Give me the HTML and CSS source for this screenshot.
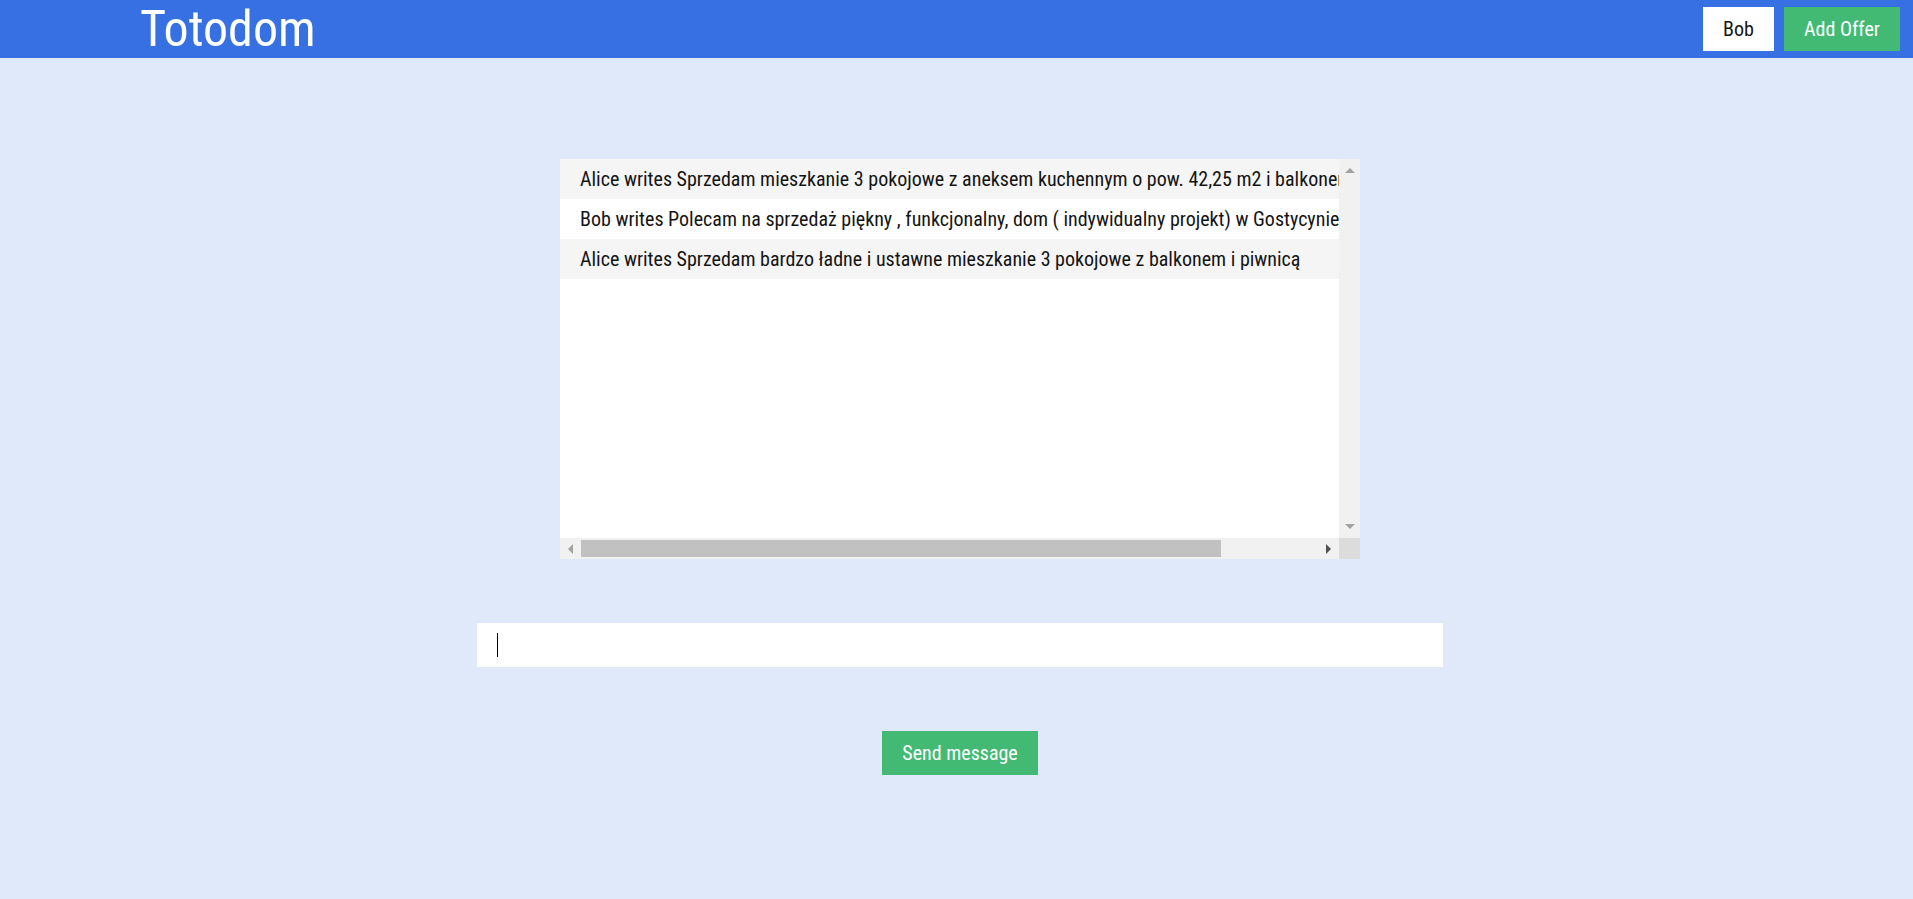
FILE: index.html
```html
<!DOCTYPE html>
<html lang="pl">
<head>
<meta charset="utf-8">
<title>Totodom</title>
<link rel="stylesheet" href="styles.css">
</head>
<body>
<header class="topbar">
  <h1 class="brand">Totodom</h1>
  <nav class="actions">
    <button class="btn btn-user">Bob</button>
    <button class="btn btn-green">Add Offer</button>
  </nav>
</header>
<main class="page">
  <section class="chat-view">
    <ul class="messages">
      <li class="msg">Alice writes Sprzedam mieszkanie 3 pokojowe z aneksem kuchennym o pow. 42,25 m2 i balkonem o pow. 4,5 m2 w nowym budownictwie</li>
      <li class="msg">Bob writes Polecam na sprzedaż piękny , funkcjonalny, dom ( indywidualny projekt) w Gostycynie</li>
      <li class="msg">Alice writes Sprzedam bardzo ładne i ustawne mieszkanie 3 pokojowe z balkonem i piwnicą</li>
    </ul>
    <div class="vscroll">
      <span class="arr arr-up"></span>
      <span class="arr arr-down"></span>
    </div>
    <div class="hscroll">
      <span class="hbtn"><span class="arr arr-left"></span></span>
      <span class="hthumb-track"><span class="hthumb"></span></span>
      <span class="hbtn"><span class="arr arr-right"></span></span>
    </div>
    <div class="corner"></div>
  </section>
  <div class="input-wrap">
    <input class="msg-input" type="text" aria-label="message">
  </div>
  <button class="btn btn-green btn-send">Send message</button>
</main>
</body>
</html>
```
FILE: styles.css
```css
* { box-sizing: border-box; }
html, body { margin: 0; padding: 0; }
body {
  background: #e0e9f9;
  font-family: Roboto, "Liberation Sans", sans-serif;
  font-stretch: condensed;
  color: #141414;
  min-height: 899px;
}
.topbar {
  height: 58px;
  background: #3670e3;
  display: flex;
  align-items: center;
  justify-content: space-between;
  padding: 0 13px 0 140px;
}
.brand {
  margin: 0;
  font-size: 50px;
  font-weight: 400;
  color: #fff;
  line-height: 58px;
}
.actions { display: flex; gap: 10px; }
.btn {
  border: 0;
  font-family: inherit;
  font-stretch: condensed;
  font-size: 20px;
  height: 44px;
  padding: 0 10px;
  cursor: pointer;
}
.btn-user { background: #fff; color: #141414; width: 71px; }
.btn-green { background: #42ba73; color: #fff; width: 116px; }
.page {
  display: flex;
  flex-direction: column;
  align-items: center;
  padding: 101px 0 0 7px;
}
.chat-view {
  display: grid;
  grid-template-columns: 779px 21px;
  grid-template-rows: 379px 21px;
  width: 800px;
  background: #fff;
}
.messages {
  list-style: none;
  margin: 0;
  padding: 0;
  overflow: hidden;
  background: #fff;
}
.msg {
  height: 40px;
  line-height: 40px;
  padding-left: 20px;
  font-size: 20px;
  white-space: nowrap;
  width: 1180px;
}
.msg:nth-child(odd) { background: #f5f5f5; }
.vscroll {
  background: #f1f1f1;
  display: flex;
  flex-direction: column;
  justify-content: space-between;
  align-items: center;
  padding: 9px 0 9px;
}
.arr { display: block; width: 0; height: 0; }
.arr-up {
  border-left: 5px solid transparent;
  border-right: 5px solid transparent;
  border-bottom: 5px solid #a3a3a3;
}
.arr-down {
  border-left: 5px solid transparent;
  border-right: 5px solid transparent;
  border-top: 5px solid #a3a3a3;
}
.hscroll {
  background: #f1f1f1;
  display: flex;
  align-items: center;
}
.hbtn {
  width: 21px;
  height: 21px;
  display: flex;
  align-items: center;
  justify-content: center;
}
.hthumb-track { flex: 1; height: 21px; padding: 2px 0; }
.hthumb { display: block; width: 640px; height: 17px; background: #c1c1c1; }
.arr-left {
  border-top: 5px solid transparent;
  border-bottom: 5px solid transparent;
  border-right: 5px solid #a3a3a3;
}
.arr-right {
  border-top: 5px solid transparent;
  border-bottom: 5px solid transparent;
  border-left: 5px solid #505050;
}
.corner { background: #dcdcdc; }
.input-wrap {
  position: relative;
  margin-top: 64px;
  width: 966px;
}
.input-wrap::after {
  content: "";
  position: absolute;
  left: 20px;
  top: 10px;
  width: 1px;
  height: 24px;
  background: #000;
}
.msg-input {
  display: block;
  width: 966px;
  height: 44px;
  border: 0;
  outline: none;
  background: #fff;
  padding: 0 20px;
  font-family: inherit;
  font-size: 20px;
  caret-color: transparent;
}
.btn-send { margin-top: 64px; width: 156px; }
```
